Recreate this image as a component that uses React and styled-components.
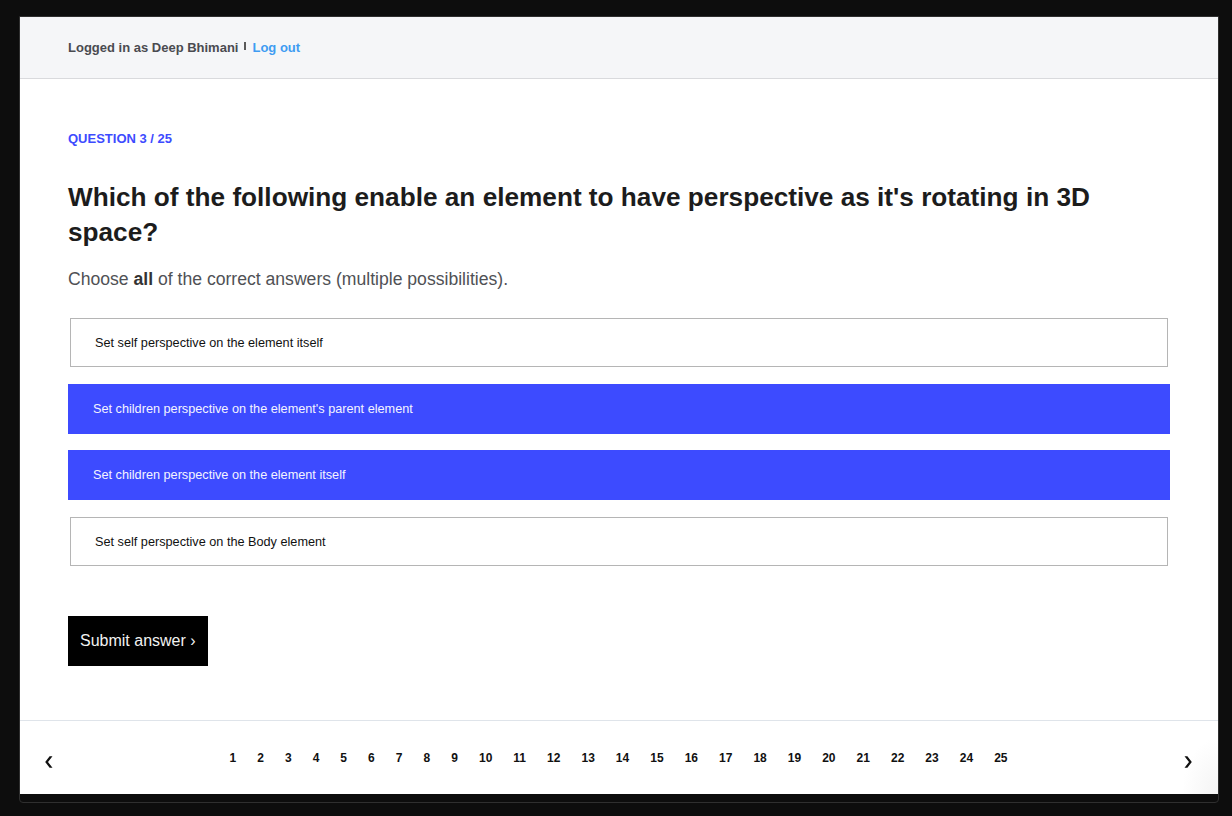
import React, { useState } from "react";
import styled, { createGlobalStyle } from "styled-components";

const Global = createGlobalStyle`
  html, body { margin: 0; padding: 0; background: #0d0d0d; }
  body { font-family: "Liberation Sans", Arial, Helvetica, sans-serif; }
  * { box-sizing: border-box; }
`;

const Page = styled.div`
  padding: 16px 0 0 19px;
  min-height: 816px;
  background: #0d0d0d;
`;

const Window = styled.div`
  width: 1200px;
  border: 1px solid #2f2f2f;
  border-radius: 0 0 4px 4px;
  background: #0d0d0d;
  padding-bottom: 8px;
`;

const Screen = styled.div`
  height: 777px;
  background: #fff;
  display: flex;
  flex-direction: column;
`;

const Header = styled.header`
  height: 62px;
  flex: none;
  background: #f5f6f8;
  border-bottom: 1px solid #d9dadd;
  display: flex;
  align-items: center;
  padding: 0 48px;
  font-size: 13px;
  line-height: 16px;
  font-weight: 700;
  color: #4a4b50;
`;

const Sep = styled.span`
  display: inline-block;
  width: 2px;
  height: 8px;
  background: #5a5a5a;
  margin: 0 6px;
  position: relative;
  top: -2px;
`;

const LogOut = styled.a`
  color: #3f9cf2;
  text-decoration: none;
  cursor: pointer;
`;

const Main = styled.main`
  flex: 1;
  padding: 52px 48px 0;
  display: flex;
  flex-direction: column;
`;

const Label = styled.div`
  font-size: 13px;
  line-height: 16px;
  font-weight: 700;
  color: #3d4bff;
  text-transform: uppercase;
`;

const Title = styled.h1`
  margin: 33px 0 0;
  font-size: 26.2px;
  line-height: 35px;
  font-weight: 700;
  color: #1c1c1c;
`;

const Sub = styled.p`
  margin: 17px 0 0;
  font-size: 17.6px;
  line-height: 24px;
  color: #505155;
  b { color: #333; }
`;

const Options = styled.div`
  margin-top: 26px;
  display: flex;
  flex-direction: column;
  gap: 16px;
`;

const Option = styled.button`
  display: flex;
  align-items: center;
  height: ${(p) => (p.$selected ? "50px" : "49px")};
  margin: ${(p) => (p.$selected ? "0" : "1px 2px")};
  padding: 0 0 0 ${(p) => (p.$selected ? "25px" : "24px")};
  border: ${(p) => (p.$selected ? "none" : "1px solid #b5b5b5")};
  background: ${(p) => (p.$selected ? "#3d4bff" : "#fff")};
  color: ${(p) => (p.$selected ? "#f4f4ff" : "#111")};
  font-family: inherit;
  font-size: 12.7px;
  text-align: left;
  cursor: pointer;
`;

const Submit = styled.button`
  align-self: flex-start;
  margin-top: 49px;
  height: 50px;
  padding: 0 12px 0 12px;
  background: #000;
  color: #f2f2f2;
  border: none;
  font-family: inherit;
  font-size: 16px;
  cursor: pointer;
`;

const Footer = styled.footer`
  height: 74px;
  flex: none;
  border-top: 1px solid #dfe4ea;
  display: flex;
  align-items: center;
  padding: 0 26px 0 25px;
  background: radial-gradient(ellipse 36px 56px at 100% 100%, #f4f4f4, #ffffff 100%);
`;

const Arrow = styled.button`
  flex: none;
  width: 8px;
  height: 12px;
  padding: 0;
  border: none;
  background: transparent;
  margin-top: 8px;
  cursor: pointer;
  display: flex;
  svg { display: block; }
`;

const Pages = styled.div`
  flex: 1;
  display: flex;
  justify-content: center;
  padding-left: 0;
`;

const PageNum = styled.span`
  padding: 0 10.52px;
  font-size: 12px;
  line-height: 16px;
  font-weight: 700;
  color: #111;
  cursor: pointer;
`;

const Chevron = ({ dir }) => (
  <svg width="8" height="12" viewBox="0 0 8 12">
    <path
      d="M4.6 0.2 H7.5 L3 6 L7.5 11.8 H4.6 L0.2 6 Z"
      fill="#111"
      transform={dir === "right" ? "translate(8 0) scale(-1 1)" : undefined}
    />
  </svg>
);

const answers = [
  "Set self perspective on the element itself",
  "Set children perspective on the element's parent element",
  "Set children perspective on the element itself",
  "Set self perspective on the Body element",
];

export default function App() {
  const [sel, setSel] = useState([1, 2]);
  const toggle = (i) =>
    setSel((s) => (s.includes(i) ? s.filter((x) => x !== i) : [...s, i]));
  return (
    <Page>
      <Global />
      <Window>
        <Screen>
          <Header>
            Logged in as Deep Bhimani
            <Sep />
            <LogOut>Log out</LogOut>
          </Header>
          <Main>
            <Label>Question 3 / 25</Label>
            <Title>
              Which of the following enable an element to have perspective as
              it's rotating in 3D space?
            </Title>
            <Sub>
              Choose <b>all</b> of the correct answers (multiple possibilities).
            </Sub>
            <Options>
              {answers.map((a, i) => (
                <Option key={i} $selected={sel.includes(i)} onClick={() => toggle(i)}>
                  {a}
                </Option>
              ))}
            </Options>
            <Submit>Submit answer ›</Submit>
          </Main>
          <Footer>
            <Arrow aria-label="previous">
              <Chevron dir="left" />
            </Arrow>
            <Pages>
              {Array.from({ length: 25 }, (_, i) => (
                <PageNum key={i}>{i + 1}</PageNum>
              ))}
            </Pages>
            <Arrow aria-label="next">
              <Chevron dir="right" />
            </Arrow>
          </Footer>
        </Screen>
      </Window>
    </Page>
  );
}
